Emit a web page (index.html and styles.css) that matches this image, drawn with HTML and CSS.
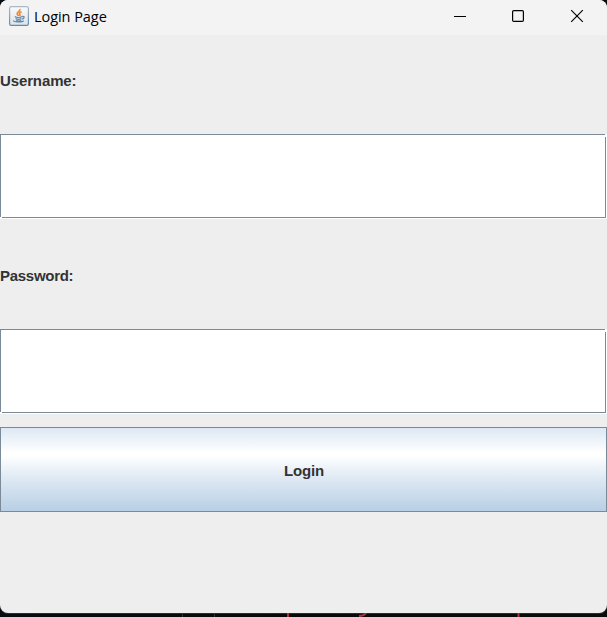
FILE: index.html
```html
<!DOCTYPE html>
<html lang="en">
<head>
<meta charset="utf-8">
<title>Login Page</title>
<link rel="stylesheet" href="styles.css">
</head>
<body>
<main class="window">
  <header class="titlebar">
    <svg class="app-icon" width="20" height="20" viewBox="0 0 20 20">
      <defs><linearGradient id="tile" x1="0" y1="0" x2="0" y2="1"><stop offset="0" stop-color="#fafafa"/><stop offset="1" stop-color="#dce3e9"/></linearGradient>
      <linearGradient id="edge" x1="0" y1="0" x2="0" y2="1"><stop offset="0" stop-color="#a9b9c6"/><stop offset="1" stop-color="#648aa8"/></linearGradient></defs>
      <rect x=".6" y=".6" width="18.8" height="18.8" rx="1.6" fill="url(#tile)" stroke="url(#edge)" stroke-width="1.2"/>
      <path d="M10.8 3c1.2 2-3.3 3-2.6 5 .2.8 1 1.300 1.200 2M12.600 5.800c-2 .8-2.600 1.600-1.800 2.500.5.600.2 1.200-.3 1.700" fill="none" stroke="#ed8a3c" stroke-width="1.700"/>
      <path d="M5.800 10.600c1.700.9 5.500.9 7.400 0M6.600 12.600c1.500.8 4.200.8 5.700 0M13.200 10.400c3-.4 2.300 2.300-.4 2.700M4.800 14.500c-1.500 1.800 8.700 2 10 .1M7 14.500c1.500.6 3.800.6 5.200 0" fill="none" stroke="#6389a8" stroke-width="1.200"/>
    </svg>
    <h1 class="title">Login Page</h1>
    <div class="controls">
      <svg width="14" height="14" viewBox="0 0 14 14"><path d="M1 7.500h12" stroke="#000"/></svg>
      <svg width="14" height="14" viewBox="0 0 14 14"><rect x="1.600" y="1.600" width="10.800" height="10.800" rx="1.200" fill="none" stroke="#000" stroke-width="1.200"/></svg>
      <svg width="14" height="14" viewBox="0 0 14 14"><path d="M1.200 1.200l11.600 11.600M12.800 1.200L1.200 12.800" stroke="#000" stroke-width="1.150"/></svg>
    </div>
  </header>
  <form class="form">
    <label class="label" for="user"><span class="label-user">Username:</span></label>
    <div class="field"><input class="input" id="user" type="text"></div>
    <label class="label" for="pass"><span class="label-pass">Password:</span></label>
    <div class="field"><input class="input" id="pass" type="password"></div>
    <button class="login" type="button">Login</button>
  </form>
</main>
<svg class="backdrop" width="607" height="4" viewBox="0 0 607 4">
  <path d="M182.500 0v4M214.500 0v4" stroke="#303236"/>
  <path d="M288 0v4M518.500 0v4" stroke="#a9353e" stroke-width="2"/>
  <path d="M359 3q5 0 7-3" fill="none" stroke="#a9353e" stroke-width="2"/>
</svg>
</body>
</html>
```

FILE: styles.css
```css
* { box-sizing: border-box; }

body {
  margin: 0;
  height: 617px;
  overflow: hidden;
  background: linear-gradient(90deg, #080b12, #0b0808 50%, #0b0b0b);
}

.window {
  height: 613px;
  overflow: hidden;
  border-radius: 8px;
  background: #eee;
  box-shadow: 0 1px 0 #2c2d2f;
}

.titlebar {
  display: flex;
  align-items: center;
  height: 35px;
  padding: 0 23px 4px 9px;
  background: #f3f3f3;
}

.app-icon { flex: none; }

.title {
  margin: 3px 0 0 5px;
  font: 400 14.5px/20px "Open Sans", "Noto Sans", sans-serif;
  letter-spacing: -0.05px;
  color: #000;
}

.controls {
  display: grid;
  grid-template-columns: 58px 59px 14px;
  margin-left: auto;
  padding-top: 1px;
}

.controls svg { display: block; }

.form {
  display: flex;
  flex-direction: column;
}

.label {
  display: flex;
  align-items: center;
  height: 92px;
  margin-bottom: 7px;
  font: bold 15px/18px "Liberation Sans", Arial, sans-serif;
  color: #333;
}

.label-user { letter-spacing: -0.12px; }

.label-pass { letter-spacing: -0.28px; }

.field {
  height: 85px;
  margin-bottom: 11px;
  padding: 0 1px 1px 0;
  background: #fff;
}

.input {
  display: block;
  width: 100%;
  height: 100%;
  padding: 0;
  border: 0;
  border-radius: 0;
  outline: 0;
  background:
    linear-gradient(#7a8a99, #7a8a99) 0 0 / calc(100% - 1px) 1px no-repeat,
    linear-gradient(#7a8a99, #7a8a99) 0 0 / 1px calc(100% - 1px) no-repeat,
    linear-gradient(#7a8a99, #7a8a99) 100% 100% / 1px calc(100% - 3px) no-repeat,
    linear-gradient(#7a8a99, #7a8a99) 100% 100% / calc(100% - 2px) 1px no-repeat,
    #fff;
}

.login {
  height: 85px;
  margin-top: 2px;
  padding: 2px 0 0 1px;
  border: 1px solid #7a8a99;
  border-radius: 0;
  background: linear-gradient(#dde8f3, #fff 30%, #fff 33%, #dde8f3 62%, #b8cfe5);
  font: bold 15px/18px "Liberation Sans", Arial, sans-serif;
  letter-spacing: -0.15px;
  color: #333;
}

.backdrop {
  display: block;
}
```
